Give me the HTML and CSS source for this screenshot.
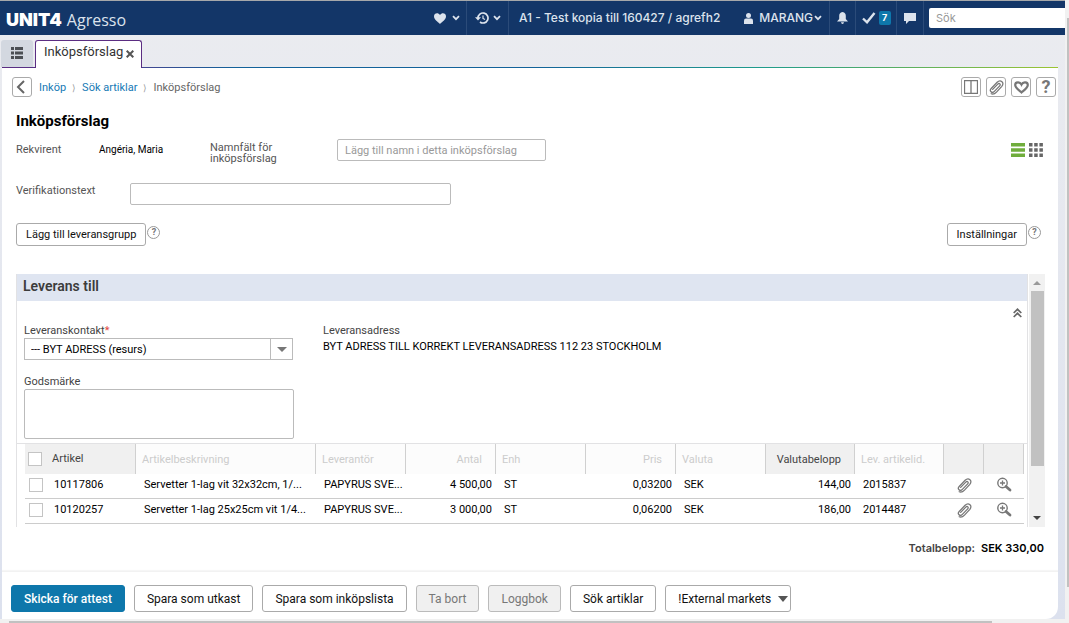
FILE: index.html
```html
<!DOCTYPE html>
<html lang="sv">
<head>
<meta charset="utf-8">
<title>Inköpsförslag</title>
<link rel="stylesheet" href="styles.css">
</head>
<body>
<svg class="defs" aria-hidden="true">
  <symbol id="caret" viewBox="0 0 8 6"><path d="M1 1.200 4 4.200 7 1.200" fill="none" stroke="currentColor" stroke-width="1.800"/></symbol>
  <symbol id="clip" viewBox="0 0 16 16"><path d="M4.400 9.800 9.200 4.800c1.400-1.400 3.200.2 1.800 1.700L6 11.700c-2.200 2.300-5.200-.4-3-2.800l5.600-5.800c3.200-3.200 7.400.4 4.400 3.800L8 12.300c-1.700 1.800-3.400 2.200-5 1.600" fill="none" stroke="currentColor" stroke-width="1.200" stroke-linecap="round"/></symbol>
  <symbol id="lens" viewBox="0 0 16 16"><circle cx="6.500" cy="6" r="4.700" fill="none" stroke="currentColor" stroke-width="1.400"/><path d="M4 6h5M6.500 3.500v5" stroke="currentColor" stroke-width="1.300"/><path d="M10 9.500 14 13" stroke="currentColor" stroke-width="2.800" stroke-linecap="round"/></symbol>
</svg>
<div class="window">
  <div class="app">
    <header class="topbar">
      <div class="brand"><b>UNIT4</b><span>Agresso</span></div>
      <button class="cell cell-fav" aria-label="Favoriter"><svg width="12" height="11" viewBox="0 0 12 11"><path d="M6 11C3.500 8.800 0 6.400 0 3.300 0 .3 4-.9 6 2c2-2.900 6-1.700 6 1.300C12 6.400 8.500 8.800 6 11z" fill="currentColor"/></svg><svg width="8" height="6"><use href="#caret"/></svg></button>
      <button class="cell cell-hist" aria-label="Historik"><svg width="14" height="12" viewBox="0 0 14 12"><path d="M3 6a5 5 0 1 1 2 4" fill="none" stroke="currentColor" stroke-width="1.700"/><path d="M0 5.200h6L3 8.600z" fill="currentColor"/><path d="M8 3.500v3l2 1" fill="none" stroke="currentColor" stroke-width="1.200"/></svg><svg width="8" height="6"><use href="#caret"/></svg></button>
      <span class="tenant">A1 - Test kopia till 160427 / agrefh2</span>
      <button class="cell cell-user"><svg width="9" height="11" viewBox="0 0 9 11"><circle cx="4.500" cy="2.500" r="2.500" fill="currentColor"/><path d="M0 11V7.500Q0 5.500 2 5.500h5q2 0 2 2V11z" fill="currentColor"/></svg><span>MARANG</span><svg width="8" height="6"><use href="#caret"/></svg></button>
      <button class="cell cell-bell" aria-label="Aviseringar"><svg width="11" height="12" viewBox="0 0 11 12"><path d="M5.500 0C8 .4 8.800 2 8.800 4v3L11 9.500H0L2.200 7V4C2.200 2 3 .4 5.500 0zM4 10.200h3Q6.800 12 5.500 12T4 10.200z" fill="currentColor"/></svg></button>
      <button class="cell cell-tasks" aria-label="Uppgifter"><svg width="14" height="12" viewBox="0 0 14 12"><path d="M1 6.500 5 10.300 12.500 1" fill="none" stroke="currentColor" stroke-width="2.400"/></svg><span class="badge">7</span></button>
      <button class="cell cell-chat" aria-label="Meddelanden"><svg width="12" height="11" viewBox="0 0 12 11"><path d="M0 0h12v8H5L2 11V8H0z" fill="currentColor"/></svg></button>
      <div class="searchwrap"><input class="search" type="search" placeholder="Sök" aria-label="Sök"></div>
    </header>
    <nav class="tabs">
      <button class="menu" aria-label="Meny"><svg width="12" height="12" viewBox="0 0 12 12"><path d="M0 0h3v3H0zM0 4.500h3v3H0zM0 9h3v3H0zM4 0h8v3H4zM4 4.500h8v3H4zM4 9h8v3H4z" fill="#4c5055"/></svg></button>
      <div class="tab"><span>Inköpsförslag</span><button aria-label="Stäng"><svg width="8" height="8" viewBox="0 0 8 8"><path d="M.7.7 7.300 7.300M7.300.7.7 7.300" stroke="#555" stroke-width="2"/></svg></button></div>
    </nav>
    <main class="panel">
      <div class="toolbar">
        <button class="sq back" aria-label="Tillbaka"><svg width="9" height="14" viewBox="0 0 9 14"><path d="M8 1 2 7l6 6" fill="none" stroke="#666" stroke-width="2"/></svg></button>
        <nav class="crumbs"><a href="#">Inköp</a><i>⟩</i><a href="#">Sök artiklar</a><i>⟩</i><span>Inköpsförslag</span></nav>
        <div class="tools">
          <button class="sq" aria-label="Kolumner"><svg width="14" height="14" viewBox="0 0 14 14"><path d="M.5.5h13v13H.5zM7 .5v13" fill="none" stroke="#777" stroke-width="1.300"/></svg></button>
          <button class="sq" aria-label="Dokument"><svg width="17" height="17"><use href="#clip"/></svg></button>
          <button class="sq" aria-label="Favorit"><svg width="15" height="13" viewBox="0 0 15 13"><path d="M7.500 11.500C4.500 9 1.200 6.800 1.200 4 1.200.8 5.800.2 7.500 3.500 9.200.2 13.800.8 13.800 4c0 2.800-3.300 5-6.300 7.500z" fill="none" stroke="#777" stroke-width="2.200"/></svg></button>
          <button class="sq qm" aria-label="Hjälp">?</button>
        </div>
      </div>
      <div class="content">
        <h1>Inköpsförslag</h1>
        <div class="row who">
          <span class="lbl l1">Rekvirent</span><span class="val">Angéria, Maria</span>
          <label class="lbl l2" for="namn">Namnfält för inköpsförslag</label>
          <input id="namn" class="box namn" placeholder="Lägg till namn i detta inköpsförslag">
          <div class="views">
            <button aria-label="Lista"><svg width="14" height="14" viewBox="0 0 14 14"><path d="M0 0h14v3.500H0zM0 5.200h14v3.500H0zM0 10.500h14V14H0z" fill="#70ad3c"/></svg></button>
            <button aria-label="Rutnät"><svg width="14" height="14" viewBox="0 0 14 14"><path d="M0 0h3.500v3.500H0zM5.200 0h3.500v3.500H5.200zM10.400 0h3.500v3.500h-3.500zM0 5.200h3.500v3.500H0zM5.200 5.200h3.500v3.500H5.200zM10.400 5.200h3.500v3.500h-3.500zM0 10.400h3.500v3.500H0zM5.200 10.400h3.500v3.500H5.200zM10.400 10.400h3.500v3.500h-3.500z" fill="#666"/></svg></button>
          </div>
        </div>
        <div class="row verif"><label class="lbl" for="ver">Verifikationstext</label><input id="ver" class="box"></div>
        <div class="row acts">
          <button class="btn small">Lägg till leveransgrupp</button><button class="help" aria-label="Hjälp">?</button>
          <button class="btn small push">Inställningar</button><button class="help" aria-label="Hjälp">?</button>
        </div>
        <div class="scroller">
          <section class="delivery">
            <h2>Leverans till</h2>
            <div class="fields">
              <div class="left">
                <label for="kontakt">Leveranskontakt<em>*</em></label>
                <div class="combo"><select id="kontakt"><option>--- BYT ADRESS (resurs)</option></select><span class="drop"><svg width="10" height="5" viewBox="0 0 10 5"><path d="M0 0h10L5 5z" fill="#777"/></svg></span></div>
                <label for="gods">Godsmärke</label>
                <textarea id="gods"></textarea>
              </div>
              <div class="addr"><span>Leveransadress</span><p>BYT ADRESS TILL KORREKT LEVERANSADRESS 112 23 STOCKHOLM</p></div>
              <button class="fold" aria-label="Fäll ihop"><svg width="9" height="10" viewBox="0 0 9 10"><path d="M.7 5 4.500 1.300 8.300 5M.7 9 4.500 5.300 8.300 9" fill="none" stroke="#666" stroke-width="1.700"/></svg></button>
            </div>
            <div class="tablewrap">
            <table>
              <colgroup><col class="c111"><col><col class="c90"><col class="c90"><col class="c90"><col class="c90"><col class="c90"><col class="c89"><col class="c89"><col class="c40"><col class="c40"></colgroup>
              <thead><tr><th class="on"><input type="checkbox" aria-label="Markera alla">Artikel</th><th>Artikelbeskrivning</th><th>Leverantör</th><th class="num">Antal</th><th>Enh</th><th class="num">Pris</th><th>Valuta</th><th class="num on">Valutabelopp</th><th>Lev. artikelid.</th><th class="on"></th><th class="on"></th></tr></thead>
              <tbody>
                <tr><td><input type="checkbox" aria-label="10117806">10117806</td><td>Servetter 1-lag vit 32x32cm, 1/...</td><td>PAPYRUS SVE...</td><td class="num">4 500,00</td><td>ST</td><td class="num">0,03200</td><td>SEK</td><td class="num">144,00</td><td>2015837</td><td class="ic"><button aria-label="Bilaga"><svg width="17" height="17"><use href="#clip"/></svg></button></td><td class="ic"><button aria-label="Visa"><svg width="16" height="16"><use href="#lens"/></svg></button></td></tr>
                <tr><td><input type="checkbox" aria-label="10120257">10120257</td><td>Servetter 1-lag 25x25cm vit 1/4...</td><td>PAPYRUS SVE...</td><td class="num">3 000,00</td><td>ST</td><td class="num">0,06200</td><td>SEK</td><td class="num">186,00</td><td>2014487</td><td class="ic"><button aria-label="Bilaga"><svg width="17" height="17"><use href="#clip"/></svg></button></td><td class="ic"><button aria-label="Visa"><svg width="16" height="16"><use href="#lens"/></svg></button></td></tr>
              </tbody>
            </table>
            </div>
          </section>
          <div class="vbar"><svg width="8" height="4" viewBox="0 0 8 4"><path d="M0 4h8L4 0z" fill="#999"/></svg><div class="thumb"></div><svg class="down" width="8" height="4" viewBox="0 0 8 4"><path d="M0 0h8L4 4z" fill="#444"/></svg></div>
        </div>
        <div class="total">Totalbelopp:<b>SEK 330,00</b></div>
      </div>
      <footer class="actions">
        <button class="btn primary">Skicka för attest</button>
        <button class="btn">Spara som utkast</button>
        <button class="btn">Spara som inköpslista</button>
        <button class="btn off" disabled>Ta bort</button>
        <button class="btn off" disabled>Loggbok</button>
        <button class="btn">Sök artiklar</button>
        <button class="btn more">!External markets<svg width="10" height="6" viewBox="0 0 10 6"><path d="M0 0h10L5 6z" fill="#555"/></svg></button>
      </footer>
    </main>
  </div>
  <div class="pagebar"><div></div></div>
</div>
<div class="hbar"><div></div></div>
</body>
</html>
```
FILE: styles.css
```css
* { box-sizing: border-box; }
body { margin: 0; min-height: 100vh; display: flex; flex-direction: column; font: 11px/14px Roboto, "Liberation Sans", sans-serif; color: #111; background: #fff; }
button, input, select, textarea { font: inherit; color: inherit; }
button { background: none; border: 0; padding: 0; }
svg { display: block; flex: none; }
.defs { position: absolute; width: 0; height: 0; }
.window { flex: 1; display: flex; }
.app { flex: 1; min-width: 0; display: flex; flex-direction: column; background: linear-gradient(#ebecf0, #dce1ee); }

.topbar { display: flex; align-items: stretch; height: 35px; background: #133668; border-top: 1px solid #a6a8aa; color: #dce3ed; font-family: Inter, sans-serif; font-size: 12px; white-space: nowrap; }
.brand { display: flex; align-items: center; gap: 5px; padding: 3px 0 0 6px; margin-right: auto; font-family: "Open Sans", sans-serif; font-size: 16px; }
.brand b { font: 900 18px Inter, sans-serif; color: #fff; }
.cell { display: flex; align-items: center; justify-content: center; border-right: 1px solid #2b4b79; }
.cell-fav { width: 40px; gap: 6px; }
.cell-hist { width: 42px; gap: 4px; }
.tenant { width: 220px; padding-left: 10px; align-self: center; font-weight: 500; }
.cell-user { width: 101px; gap: 4px; justify-content: flex-end; padding-right: 7px; font-weight: 500; }
.cell-user span { margin-left: 2px; }
.cell-user svg:last-child { margin-left: -3px; }
.cell-bell { width: 26px; }
.cell-tasks { width: 41px; gap: 3px; }
.cell-chat { width: 27px; }
.badge { width: 12px; height: 14px; border-radius: 2px; background: #0e77ab; color: #fff; font-size: 9px; font-weight: 700; line-height: 14px; }
.searchwrap { padding: 7px 0 0 5px; }
.search { display: block; width: 136px; height: 20px; border: 0; border-radius: 2px 0 0 2px; background: #fff; padding: 0 7px; font-size: 11px; color: #111; }
::placeholder { color: #999; opacity: 1; }

.tabs { display: flex; align-items: flex-end; height: 32px; padding: 0 0 0 1px; gap: 2px; }
.menu { display: flex; align-items: center; justify-content: center; width: 32px; height: 27px; padding-bottom: 2px; background: #d3d8e0; border-radius: 3px 3px 0 0; }
.tab { position: relative; z-index: 1; display: flex; align-items: center; justify-content: space-between; width: 107px; height: 28px; margin-bottom: -1px; padding: 0 7px 6px 8px; background: #fff; border: 1px solid #5b2d82; border-bottom: 0; border-radius: 3px 3px 0 0; font-size: 13px; color: #333; }
.tab button { padding-top: 4px; }

.panel { flex: 1; display: flex; flex-direction: column; margin: 0 7px 0 2px; padding-top: 1px; background: linear-gradient(90deg, #5b2d82, #4a4290 12%, #13629a 22%, #13629a 50%, #1f9c8c 72%, #9cc432) top / 100% 1px no-repeat #fff; border-radius: 0 0 12px 0; overflow: clip; }
.toolbar { display: flex; align-items: center; padding: 9px 2px 0 10px; }
.sq { display: flex; align-items: center; justify-content: center; width: 20px; height: 20px; border: 1px solid #aaa; border-radius: 3px; color: #777; }
.back { padding-right: 3px; }
.qm { font-size: 18px; font-weight: 700; }
.crumbs { display: flex; gap: 6px; margin-left: 7px; padding-top: 1px; color: #666; }
.crumbs a { color: #1679b5; text-decoration: none; }
.crumbs i { font-style: normal; font-size: 9px; color: #999; width: 4px; text-align: center; }
.tools { display: flex; gap: 5px; margin-left: auto; }

.content { flex: 1; padding: 16px 13px 0 14px; }
h1 { margin: 0 0 9px; font-size: 15px; line-height: 17px; font-weight: 700; color: #000; }
.row { display: flex; }
.lbl { color: #555; }
.box { height: 22px; border: 1px solid #bbb; border-radius: 2px; padding: 0 7px; background: #fff; }
.who { height: 22px; line-height: 11px; }
.who .l1 { width: 83px; padding-top: 5px; }
.who .val { width: 111px; padding-top: 5px; color: #000; font-size: 10px; }
.who .l2 { width: 127px; padding: 3px 40px 0 0; }
.namn { width: 209px; }
.views { display: flex; align-items: flex-start; gap: 4px; margin: 4px 2px 0 auto; }
.verif { margin-top: 22px; }
.verif .lbl { width: 114px; padding-top: 1px; }
.verif .box { width: 321px; }
.acts { margin-top: 18px; }
.btn { height: 27px; padding: 0 12px; border: 1px solid #aaa; border-radius: 3px; background: #fff; color: #111; white-space: nowrap; font-size: 12px; }
.small { height: 23px; padding: 0 9px; font-size: 11px; }
.push { margin-left: auto; }
.help { width: 13px; height: 13px; margin: 3px 0 0 1px; border: 1px solid #999; border-radius: 50%; color: #777; font-size: 9px; font-weight: 700; line-height: 11px; }
.push + .help { margin-right: 4px; }

.scroller { display: flex; gap: 1px; margin-top: 28px; }
.delivery { flex: 1; min-width: 0; border: solid #e2e2e4; border-width: 0 1px; }
h2 { margin: 0; padding: 0 6px; height: 27px; background: #dfe5f1; font-size: 14px; line-height: 25px; font-weight: 600; color: #3c3c3c; }
.fields { display: flex; height: 142px; padding: 23px 5px 0 7px; color: #444; }
.left { display: flex; flex-direction: column; width: 270px; }
.left em { color: #e2483d; font-style: normal; }
.combo { display: flex; width: 269px; height: 22px; margin: 0 0 15px; border: 1px solid #bbb; color: #000; }
.combo select { flex: 1; appearance: none; border: 0; background: #fff; padding: 1px 6px 0; }
.drop { display: flex; align-items: center; justify-content: center; width: 22px; border-left: 1px solid #bbb; }
textarea { height: 50px; border: 1px solid #bbb; border-radius: 2px; resize: none; }
.addr { margin-left: 29px; }
.addr p { margin: 2px 0 0; color: #000; }
.fold { margin: -16px 0 0 auto; align-self: flex-start; }
.tablewrap { border-top: 1px solid #e2e2e4; padding: 0 3px 3px 8px; }
table { width: 100%; table-layout: fixed; border-collapse: separate; border-spacing: 0; }
.c111 { width: 111px; }
.c90 { width: 90px; }
.c89 { width: 89px; }
.c40 { width: 40px; }
th { height: 30px; padding: 2px 6px 0; font-weight: 400; text-align: left; color: #ccc; background: #fcfcfc; border-right: 1px solid #d0d0d0; white-space: nowrap; }
th.on { background: #f0f0f0; color: #444; }
th.num { padding-right: 13px; }
th:first-child { padding: 0 3px; }
td { height: 25px; padding: 0 4px 2px 8px; border-bottom: 1px solid #ccc; color: #000; white-space: nowrap; }
td:first-child { padding-left: 4px; }
.num { text-align: right; }
input[type=checkbox] { appearance: none; width: 14px; height: 14px; margin: 0 10px 0 0; border: 1px solid #c4c4c4; background: #fff; vertical-align: middle; }
td input[type=checkbox] { margin-right: 11px; }
td.ic { padding: 0 0 2px; color: #777; }
.ic button { display: block; margin: 0 auto; color: #777; }
.vbar { display: flex; flex-direction: column; align-items: center; width: 16px; padding: 7px 0; background: #f1f1f1; }
.thumb { width: 13px; height: 175px; margin-top: 6px; background: #c1c1c1; }
.down { margin-top: auto; }
.total { display: flex; justify-content: flex-end; gap: 6px; padding: 14px 1px 0 0; font-family: Inter, sans-serif; font-weight: 600; color: #444; }
.total b { color: #000; font-weight: 600; }
.actions { display: flex; gap: 9px; padding: 13px 9px 7px; border-top: 1px solid #f2f2f2; box-shadow: 0 -1px 1px #f6f6f6; }
.primary { background: #0e77ab; border-color: #0e77ab; color: #fff; font-weight: 500; }
.off { background: #f0f0f0; border-color: #bbb; color: #777; }
.more { display: flex; align-items: center; gap: 7px; padding-right: 2px; }
.pagebar { width: 4px; padding: 18px 0 32px; background: #f1f1f1; display: flex; }
.pagebar div { flex: 1; margin-left: 2px; background: #c1c1c1; }
.hbar { height: 4px; padding: 2px 77px 0 9px; background: #f1f1f1; }
.hbar div { height: 2px; background: #c1c1c1; }
```
